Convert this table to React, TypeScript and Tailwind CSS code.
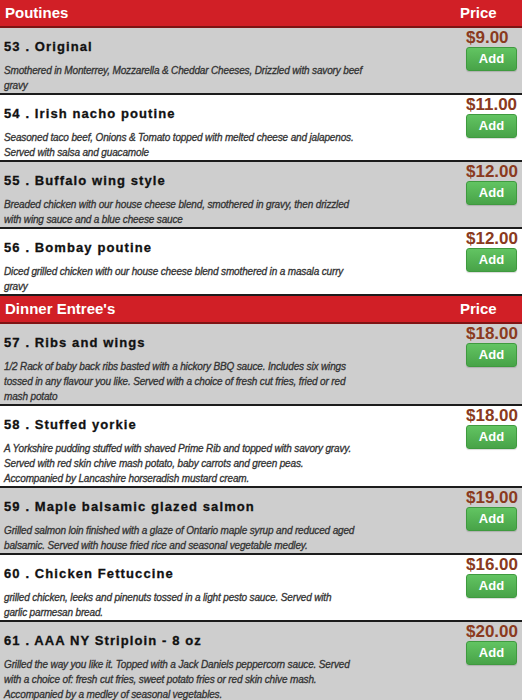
import React from "react";

interface Item {
  num: number;
  name: string;
  desc: string;
  price: string;
}

interface Section {
  title: string;
  items: Item[];
}

const sections: Section[] = [
  {
    title: "Poutines",
    items: [
      {
        num: 53,
        name: "Original",
        desc: "Smothered in Monterrey, Mozzarella & Cheddar Cheeses, Drizzled with savory beef\ngravy",
        price: "$9.00",
      },
      {
        num: 54,
        name: "Irish nacho poutine",
        desc: "Seasoned taco beef, Onions & Tomato topped with melted cheese and jalapenos.\nServed with salsa and guacamole",
        price: "$11.00",
      },
      {
        num: 55,
        name: "Buffalo wing style",
        desc: "Breaded chicken with our house cheese blend, smothered in gravy, then drizzled\nwith wing sauce and a blue cheese sauce",
        price: "$12.00",
      },
      {
        num: 56,
        name: "Bombay poutine",
        desc: "Diced grilled chicken with our house cheese blend smothered in a masala curry\ngravy",
        price: "$12.00",
      },
    ],
  },
  {
    title: "Dinner Entree's",
    items: [
      {
        num: 57,
        name: "Ribs and wings",
        desc: "1/2 Rack of baby back ribs basted with a hickory BBQ sauce. Includes six wings\ntossed in any flavour you like. Served with a choice of fresh cut fries, fried or red\nmash potato",
        price: "$18.00",
      },
      {
        num: 58,
        name: "Stuffed yorkie",
        desc: "A Yorkshire pudding stuffed with shaved Prime Rib and topped with savory gravy.\nServed with red skin chive mash potato, baby carrots and green peas.\nAccompanied by Lancashire horseradish mustard cream.",
        price: "$18.00",
      },
      {
        num: 59,
        name: "Maple balsamic glazed salmon",
        desc: "Grilled salmon loin finished with a glaze of Ontario maple syrup and reduced aged\nbalsamic. Served with house fried rice and seasonal vegetable medley.",
        price: "$19.00",
      },
      {
        num: 60,
        name: "Chicken Fettuccine",
        desc: "grilled chicken, leeks and pinenuts tossed in a light pesto sauce. Served with\ngarlic parmesan bread.",
        price: "$16.00",
      },
      {
        num: 61,
        name: "AAA NY Striploin - 8 oz",
        desc: "Grilled the way you like it. Topped with a Jack Daniels peppercorn sauce. Served\nwith a choice of: fresh cut fries, sweet potato fries or red skin chive mash.\nAccompanied by a medley of seasonal vegetables.",
        price: "$20.00",
      },
    ],
  },
];

function MenuRow({ item, index }: { item: Item; index: number }) {
  return (
    <div
      className={`flex border-b-2 border-[#1c1c1c] ${
        index % 2 === 0 ? "bg-[#cecece]" : "bg-white"
      }`}
    >
      <div className="flex-1 min-w-0 pl-[4px] pt-[8px]">
        <div className="h-[21px] leading-[21px] text-[13px] font-bold tracking-[1.1px] text-[#111] [-webkit-text-stroke:0.3px_#111]">
          {item.num} . {item.name}
        </div>
        <p className="mt-[6px] whitespace-pre text-[10px] leading-[15px] tracking-[-0.15px] italic text-[#333] [-webkit-text-stroke:0.3px_#333]">
          {item.desc}
        </p>
      </div>
      <div className="w-[56px] shrink-0 pt-[1px]">
        <div className="text-[17px] leading-[17px] font-bold text-[#8a3a20]">
          {item.price}
        </div>
        <button className="mt-[1px] w-[51px] h-[24px] rounded-[3px] border border-[#3f9a3f] bg-gradient-to-b from-[#62c462] to-[#48a348] text-[13px] font-bold text-white shadow-[0_1px_1px_rgba(0,0,0,0.15)]">
          Add
        </button>
      </div>
    </div>
  );
}

export default function App() {
  return (
    <div className="w-[522px] h-[700px] overflow-hidden bg-white font-['Liberation_Sans',Arial,sans-serif]">
      {sections.map((section) => (
        <div key={section.title}>
          <div className="flex h-[28px] items-center bg-[#d11f26] border-b-2 border-[#7e1414] text-white text-[15px] font-bold">
            <div className="flex-1 pl-[5px]">{section.title}</div>
            <div className="w-[62px]">Price</div>
          </div>
          {section.items.map((item, i) => (
            <MenuRow key={item.num} item={item} index={i} />
          ))}
        </div>
      ))}
    </div>
  );
}
